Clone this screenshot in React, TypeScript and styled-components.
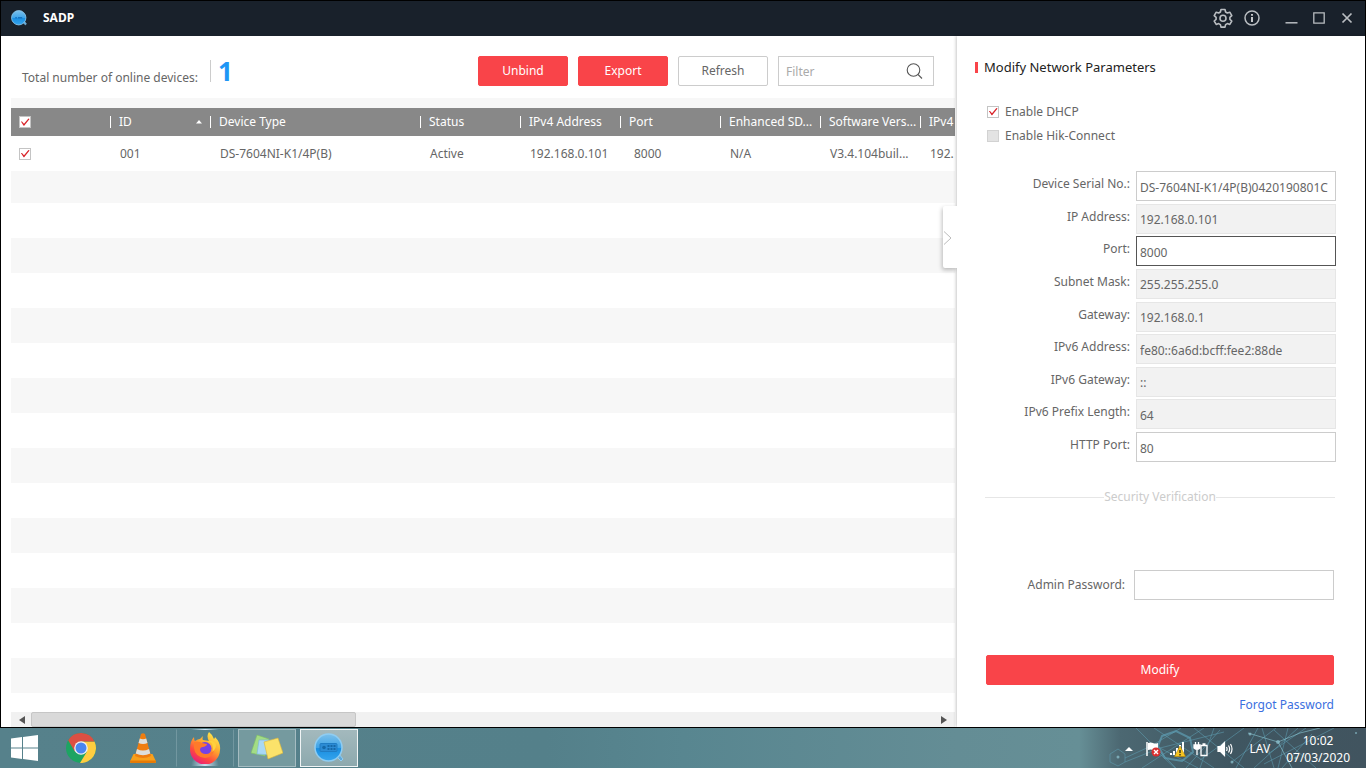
import React from 'react';
import styled, { createGlobalStyle, css } from 'styled-components';

const GlobalStyle = createGlobalStyle`
  *, *::before, *::after { box-sizing: border-box; }
  body {
    margin: 0;
    background: #fff;
    color: #666;
    font: 12px/16px 'Noto Sans', 'Segoe UI', sans-serif;
  }
  button, input { font: inherit; color: inherit; }
`;

const Screen = styled.div`
  display: flex;
  flex-direction: column;
  min-height: 100vh;
`;

const Window = styled.div`
  flex: 1;
  display: flex;
  flex-direction: column;
  border: 1px solid #000;
  background: #fff;
`;

const TitleBar = styled.header`
  display: flex;
  align-items: center;
  height: 35px;
  padding: 0 10px 1px;
  background: #19212b;
  color: #fff;
`;

const AppName = styled.h1`
  flex: 1;
  margin: 0 0 0 16px;
  font-size: 12px;
  line-height: 16px;
`;

const TitleButton = styled.button<{ $wide?: boolean }>`
  display: flex;
  align-items: center;
  justify-content: center;
  width: ${(p) => (p.$wide ? 29 : 28)}px;
  height: 32px;
  padding: 0;
  border: 0;
  background: none;
  color: #b9bdc1;
`;

const TitleActions = styled.div`
  display: flex;
  margin-right: 11px;
`;

const WindowActions = styled.div`
  display: flex;
  margin-right: -6px;
`;

const Body = styled.div`
  flex: 1;
  display: flex;
`;

const Main = styled.main`
  flex: 1;
  min-width: 0;
  display: flex;
  flex-direction: column;
  padding: 0 2px 0 10px;
`;

const Toolbar = styled.div`
  display: flex;
  align-items: center;
  gap: 10px;
  height: 62px;
  padding: 8px 21px 0 11px;
`;

const DeviceTotal = styled.p`
  flex: 1;
  display: flex;
  align-items: center;
  margin: 0;
  white-space: nowrap;
`;

const TotalLabel = styled.span`
  padding-top: 13px;
`;

const TotalCount = styled.strong`
  display: flex;
  align-items: center;
  height: 22px;
  margin-left: 12px;
  padding-left: 7px;
  border-left: 1px solid #ccc;
  color: #1e96f5;
  font-size: 26px;
`;

const Button = styled.button<{ $primary?: boolean; $block?: boolean }>`
  width: ${(p) => (p.$block ? '100%' : '90px')};
  height: 30px;
  padding: 0;
  border: 1px solid ${(p) => (p.$primary ? '#f94449' : '#ccc')};
  border-radius: 2px;
  background: ${(p) => (p.$primary ? '#f94449' : '#fff')};
  color: ${(p) => (p.$primary ? '#fff' : '#666')};
`;

const FilterBox = styled.label`
  display: flex;
  align-items: center;
  width: 156px;
  height: 30px;
  padding: 0 10px 0 7px;
  border: 1px solid #ccc;
`;

const FilterInput = styled.input`
  flex: 1;
  min-width: 0;
  padding: 2px 0 0;
  border: 0;
  outline: 0;
  background: none;
  &::placeholder { color: #aaa; opacity: 1; }
`;

const TableArea = styled.div`
  flex: 1;
  overflow: hidden;
  padding-top: 10px;
  background: linear-gradient(#f7f7f7 10px, transparent 10px),
    repeating-linear-gradient(#fff 0 35px, #f7f7f7 35px 70px) 0 105px no-repeat,
    #f7f7f7;
`;

const DeviceTable = styled.table`
  width: 1009px;
  border-collapse: collapse;
  table-layout: fixed;
  text-align: left;
  white-space: nowrap;
`;

const HeadRow = styled.tr`
  height: 28px;
  background: #888;
  color: #fff;
`;

const BodyRow = styled.tr`
  height: 35px;
  background: #fff;
`;

const HeadCell = styled.th<{ $width: number }>`
  width: ${(p) => p.$width}px;
  padding: 0;
  font-weight: 400;
`;

const HeadLabel = styled.span`
  display: flex;
  align-items: center;
  justify-content: space-between;
  height: 12px;
  padding: 0 8px;
  border-left: 1px solid #fff;
`;

const TightHeadLabel = styled(HeadLabel)`
  padding-right: 0;
`;

const Cell = styled.td<{ $indent?: number }>`
  padding: 0 0 0 ${(p) => p.$indent ?? 10}px;
`;

const CheckCell = styled.div`
  display: flex;
  padding-left: 8px;
`;

const Check = styled.input.attrs({ type: 'checkbox' })`
  appearance: none;
  flex: none;
  width: 12px;
  height: 12px;
  margin: 0;
  border: 1px solid #c4c4c4;
  background: #fff;
  &:checked::before {
    content: '';
    display: block;
    width: 10px;
    height: 10px;
    background: #d9262c;
    clip-path: polygon(9% 46%, 20% 46%, 40% 68%, 84% 16%, 96% 20%, 42% 88%, 36% 88%);
  }
  &:disabled { background: #e3e3e3; border-color: #d2d2d2; }
`;

const ScrollBar = styled.div`
  display: flex;
  align-items: center;
  height: 15px;
  padding: 0 8px;
  background: #f1f1f1;
`;

const ScrollTrack = styled.div`
  flex: 1;
  margin: 0 6px;
`;

const ScrollThumb = styled.div`
  width: 36%;
  height: 15px;
  border: 1px solid #c6c6c6;
  border-radius: 2px;
  background: #d9d9d9;
`;

const Panel = styled.aside`
  position: relative;
  flex: none;
  width: 408px;
  padding: 22px 29px 0 18px;
  background: #fff;
  box-shadow: -1px 0 3px rgba(0, 0, 0, 0.22);
`;

const PanelToggle = styled.button`
  position: absolute;
  top: 170px;
  left: -14px;
  display: flex;
  align-items: center;
  width: 14px;
  height: 62px;
  padding: 2px 0 0;
  border: 0;
  border-radius: 2px 0 0 2px;
  background: #fff;
  box-shadow: -1px 2px 4px rgba(0, 0, 0, 0.25);
  clip-path: inset(-6px 0 -8px -6px);
`;

const PanelTitle = styled.h2`
  display: flex;
  align-items: center;
  gap: 6px;
  margin: 0 0 26px;
  color: #222;
  font-size: 13px;
  font-weight: 400;
  line-height: 18px;
  &::before {
    content: '';
    width: 3px;
    height: 11px;
    background: #f94449;
  }
`;

const CheckLine = styled.label`
  display: flex;
  align-items: center;
  gap: 6px;
  height: 24px;
  padding: 0 0 5px 12px;
`;

const Fields = styled.div`
  display: grid;
  grid-auto-rows: 30px;
  align-content: space-between;
  height: 291px;
  margin-top: 21px;
`;

const Field = styled.div`
  display: flex;
  justify-content: flex-end;
  gap: 6px;
`;

const PasswordField = styled(Field)`
  align-items: center;
  gap: 9px;
`;

const FieldLabel = styled.label`
  padding-bottom: 1px;
  ${Fields} & { padding-top: 5px; }
`;

const fieldState = {
  normal: css`border-color: #ccc;`,
  focused: css`border-color: #555;`,
  locked: css`border-color: #e6e6e6; background: #f2f2f2;`,
};

const TextInput = styled.input<{ $state?: keyof typeof fieldState }>`
  width: 200px;
  height: 30px;
  padding: 2px 0 0 3px;
  border: 1px solid;
  border-radius: 0;
  outline: 0;
  background: #fff;
  ${(p) => fieldState[p.$state ?? 'normal']}
`;

const SectionRule = styled.h3`
  display: flex;
  align-items: center;
  margin: 26px 1px 64px 10px;
  color: #ccc;
  font-size: 12px;
  font-weight: 400;
  line-height: 18px;
  &::before, &::after {
    content: '';
    flex: 1;
    height: 1px;
    background: #e6e6e6;
  }
`;

const Verification = styled.div`
  padding: 0 2px 12px 11px;
`;

const ButtonRow = styled.div`
  margin-top: 55px;
`;

const LinkRow = styled.div`
  margin-top: 12px;
  text-align: right;
`;

const ForgotLink = styled.a`
  color: #3b6fe0;
  text-decoration: none;
`;

const TaskBar = styled.footer`
  position: relative;
  display: flex;
  justify-content: space-between;
  height: 40px;
  overflow: hidden;
  background: linear-gradient(90deg, #56818b 0, #54808a 40%, #588690 50%, #648d95 70%, #668f96 79%, #4c6872 82%, #3f5661 90%, #41545f 100%);
`;

const Backdrop = styled.svg`
  position: absolute;
  top: 0;
  right: 0;
`;

const TaskItems = styled.nav`
  display: flex;
`;

const TaskButton = styled.button<{ $look?: 'start' | 'open' | 'active' }>`
  display: flex;
  align-items: center;
  justify-content: center;
  width: ${(p) => (p.$look === 'start' ? 50 : 58)}px;
  height: 38px;
  margin: 1px ${(p) => (p.$look === 'start' ? 0 : 2)}px;
  padding: ${(p) => (p.$look === 'start' ? '0 2px 0 0' : 0)};
  border: 1px solid transparent;
  background: none;
  ${(p) => p.$look === 'open' && css`
    border-color: #a5bcc1;
    background: #759a9f;
  `}
  ${(p) => p.$look === 'active' && css`
    border-color: #f0f4f5;
    background: linear-gradient(#a3b9bd, #8da9ae);
  `}
`;

const FirefoxButton = styled(TaskButton)`
  border-color: transparent #7297a0;
  background: radial-gradient(circle at 50% 100%, #cfe4f5 0, transparent 14px);
`;

const Tray = styled.div`
  position: relative;
  display: flex;
  align-items: center;
  padding: 2px 16px 0 0;
  color: #fff;
`;

const TrayButton = styled.button`
  display: flex;
  align-items: center;
  justify-content: center;
  width: 24px;
  height: 32px;
  padding: 0;
  border: 0;
  background: none;
`;

const Language = styled.span`
  margin: 0 16px 0 12px;
`;

const Clock = styled.time`
  text-align: center;
  line-height: 17px;
`;

const columns = [
  { label: 'ID', width: 100, sorted: true },
  { label: 'Device Type', width: 210 },
  { label: 'Status', width: 100 },
  { label: 'IPv4 Address', width: 100 },
  { label: 'Port', width: 100 },
  { label: 'Enhanced SD...', width: 100 },
  { label: 'Software Vers...', width: 100 },
  { label: 'IPv4', width: 100 },
];

const devices = [
  ['001', 'DS-7604NI-K1/4P(B)', 'Active', '192.168.0.101', '8000', 'N/A', 'V3.4.104buil...', '192.'],
];

const fields: { id: string; label: string; value: string; state?: keyof typeof fieldState }[] = [
  { id: 'serial', label: 'Device Serial No.:', value: 'DS-7604NI-K1/4P(B)0420190801C' },
  { id: 'ip', label: 'IP Address:', value: '192.168.0.101', state: 'locked' },
  { id: 'port', label: 'Port:', value: '8000', state: 'focused' },
  { id: 'mask', label: 'Subnet Mask:', value: '255.255.255.0', state: 'locked' },
  { id: 'gateway', label: 'Gateway:', value: '192.168.0.1', state: 'locked' },
  { id: 'ip6', label: 'IPv6 Address:', value: 'fe80::6a6d:bcff:fee2:88de', state: 'locked' },
  { id: 'gateway6', label: 'IPv6 Gateway:', value: '::', state: 'locked' },
  { id: 'prefix', label: 'IPv6 Prefix Length:', value: '64', state: 'locked' },
  { id: 'http', label: 'HTTP Port:', value: '80' },
];

const SadpIcon = ({ size, detailed }: { size: number; detailed?: boolean }) => (
  <svg width={size} height={size} viewBox="0 0 30 30" aria-hidden="true">
    <defs>
      <linearGradient id={`lens${size}`} x1="0" y1="0" x2="0" y2="1">
        <stop offset="0" stopColor="#7cc0ea" />
        <stop offset="0.5" stopColor="#3fa4e8" />
        <stop offset="0.54" stopColor="#1a8ee0" />
        <stop offset="1" stopColor="#35a5ee" />
      </linearGradient>
    </defs>
    <path d="m22 23 5 5 2-2-4-5" fill="#5fa9da" stroke="#8fcdf2" />
    <circle cx="14.500" cy="14.500" r="13.500" fill={`url(#lens${size})`} stroke="#8fcdf2" strokeWidth="1.500" />
    {detailed ? (
      <>
        <rect x="6" y="10.500" width="17" height="8" rx="1" fill="#2c8bd4" stroke="#1f7cc4" />
        <circle cx="10" cy="14.500" r="1.800" fill="#1568a8" />
        <path d="M13.500 13h8M13.500 16h8" stroke="#1568a8" strokeWidth="1.800" strokeDasharray="2 1" />
      </>
    ) : (
      <path d="M8 14.500h3M13 14.500h8" stroke="#1673c0" strokeWidth="3" />
    )}
  </svg>
);

const GearIcon = () => (
  <svg width="20" height="20" viewBox="0 0 20 20" fill="none" stroke="currentColor" strokeWidth="1.600" strokeLinejoin="round" aria-hidden="true">
    <path d="M8 1.500h4l.6 2.500 1.700 1 2.500-.8 2 3.400-1.900 1.700v2l1.900 1.700-2 3.400-2.500-.8-1.700 1-.6 2.500H8l-.6-2.500-1.700-1-2.500.8-2-3.400 1.900-1.700v-2L1.200 7.600l2-3.400 2.500.8 1.700-1z" />
    <circle cx="10" cy="10.200" r="3" />
  </svg>
);

const InfoIcon = () => (
  <svg width="16" height="16" viewBox="0 0 16 16" fill="none" stroke="currentColor" strokeWidth="1.500" aria-hidden="true">
    <circle cx="8" cy="8" r="7" />
    <path d="M8 7v5M8 4v1.700" stroke="#fff" />
  </svg>
);

const MinimizeIcon = () => (
  <svg width="13" height="14" viewBox="0 0 13 14" aria-hidden="true">
    <path d="M.5 11.800h12" stroke="currentColor" strokeWidth="1.500" />
  </svg>
);

const MaximizeIcon = () => (
  <svg width="12" height="12" viewBox="0 0 12 12" aria-hidden="true">
    <path d="M.8.8h10.400v10.400H.8z" fill="none" stroke="currentColor" strokeWidth="1.300" />
  </svg>
);

const CloseIcon = () => (
  <svg width="12" height="12" viewBox="0 0 12 12" aria-hidden="true">
    <path d="m1.500 1.500 9 9m0-9-9 9" stroke="currentColor" strokeWidth="1.700" />
  </svg>
);

const SearchIcon = () => (
  <svg width="17" height="17" viewBox="0 0 17 17" fill="none" stroke="#555" strokeWidth="1.100" aria-hidden="true">
    <circle cx="7.500" cy="7" r="6.300" />
    <path d="m12 11.500 4 4" />
  </svg>
);

const Triangle = ({ d, w, h, fill }: { d: string; w: number; h: number; fill: string }) => (
  <svg width={w} height={h} viewBox={`0 0 ${w} ${h}`} aria-hidden="true">
    <path d={d} fill={fill} />
  </svg>
);

const WindowsIcon = () => (
  <svg width="27" height="26" viewBox="0 0 27 26" fill="#fff" aria-hidden="true">
    <path d="M0 3.500 11 2v10.500H0zM12 1.900 27 0v12.500H12zM0 13.500h11V24L0 22.500zM12 13.500h15V26l-15-1.900z" />
  </svg>
);

const ChromeIcon = () => (
  <svg width="30" height="30" viewBox="0 0 30 30" aria-hidden="true">
    <circle cx="15" cy="15" r="15" fill="#1da462" />
    <path d="M15 8.500h13.500A15 15 0 0 1 14 30l7-11.500z" fill="#ffcd40" />
    <path d="M2.200 7.300A15 15 0 0 1 28.500 8.500H15L8.800 18.500z" fill="#dd4f43" />
    <circle cx="15" cy="15" r="6.800" fill="#f1f1f1" />
    <circle cx="15" cy="15" r="5.500" fill="#4a86f0" />
  </svg>
);

const VlcIcon = () => (
  <svg width="28" height="30" viewBox="0 0 28 30" aria-hidden="true">
    <path d="M4.500 21h19L27 28.500q0 1.500-1.500 1.500h-23Q1 30 1 28.500z" fill="#f9a01b" />
    <path d="M1 27.500h26v1Q27 30 25.500 30h-23Q1 30 1 28.500z" fill="#e67a05" />
    <path d="M12 1q2-1.500 4 0l6 22q-8 4-16 0z" fill="#ef7d10" />
    <path d="M10.800 5.500q3.200 1.500 6.400 0l1.300 4.500q-4.500 2-9 0zM8 16q6 3 12 0l1.300 4.500q-7.300 3.500-14.600 0z" fill="#dededb" />
  </svg>
);

const FirefoxIcon = () => (
  <svg width="32" height="32" viewBox="0 0 32 32" aria-hidden="true">
    <defs>
      <linearGradient id="fox" x1="0.8" y1="0" x2="0.2" y2="1">
        <stop offset="0" stopColor="#fff04f" />
        <stop offset="0.4" stopColor="#ffa62e" />
        <stop offset="0.7" stopColor="#ff4b3e" />
        <stop offset="1" stopColor="#e31587" />
      </linearGradient>
    </defs>
    <path d="M20 0q4 3 5 7 1-1 1-2 6 6 5 13A15 15 0 0 1 1 17Q1 9 5 5q0 3 1 4 3-2 5-2l3-3q-1 3 0 4l6 1q-3-5 0-9z" fill="url(#fox)" />
    <circle cx="16" cy="16.500" r="6.500" fill="#7542e5" />
    <path d="M5 10q5-1 8 1l5 1q0 2-4 3-3 0-3 3 1 4 6 4 5 0 8-4-1 7-9 8Q6 25 5 16z" fill="#ff7a2a" />
    <path d="M18 9q6 1 6 7 0 3-1 4 4-3 4-7-1-5-9-4z" fill="#ffd13d" />
  </svg>
);

const NotesIcon = () => (
  <svg width="32" height="28" viewBox="0 0 32 28" aria-hidden="true">
    <path d="m6 1 12 4-4 17-14-3z" fill="#a3dc86" stroke="#7fbf63" strokeWidth=".6" />
    <path d="m8 6 14 0-1 15-15-1z" fill="#a9d8f5" stroke="#79b4dc" strokeWidth=".6" />
    <path d="m13 8 14-4 5 15-15 6z" fill="#fbe26a" stroke="#d9b63a" strokeWidth=".6" />
  </svg>
);

const FlagIcon = () => (
  <svg width="16" height="16" viewBox="0 0 16 16" aria-hidden="true">
    <path d="M2 1v14" stroke="#fff" strokeWidth="1.500" />
    <path d="M3 2q3-1 5 0t5 0v7q-3 1-5 0T3 9z" fill="#fff" />
    <circle cx="11" cy="11" r="4.500" fill="#d93030" />
    <path d="m9 9 4 4m0-4-4 4" stroke="#fff" strokeWidth="1.400" />
  </svg>
);

const SignalIcon = () => (
  <svg width="17" height="16" viewBox="0 0 17 16" aria-hidden="true">
    <path d="M1 12h2v2H1zM4 10h2v4H4zM7 7h2v7H7zM10 4h2v10h-2zM13 1h2v13h-2z" fill="#fff" />
    <path d="m11 5 5.500 10.500h-11z" fill="#f7c520" stroke="#b98700" strokeWidth=".6" />
    <path d="M11 9v3m0 1v1.500" stroke="#222" strokeWidth="1.300" />
  </svg>
);

const BatteryIcon = () => (
  <svg width="16" height="16" viewBox="0 0 16 16" fill="none" stroke="#fff" strokeWidth="1.300" aria-hidden="true">
    <path d="M8 4.500h6v10H8zM9.500 3h3" />
    <path d="M1 4h6v3L5.500 8h-3L1 7z" fill="#fff" />
    <path d="M2.500 4V1M5.500 4V1M4 8v6" />
  </svg>
);

const SpeakerIcon = () => (
  <svg width="17" height="16" viewBox="0 0 17 16" fill="none" stroke="#fff" strokeWidth="1.200" aria-hidden="true">
    <path d="M1 5.500h2.500L7.500 1.500v13l-4-4H1z" fill="#fff" />
    <path d="M9.500 6q1.200 2 0 4M11.500 4.500q2.200 3.500 0 7M13.500 3q3 5 0 10" />
  </svg>
);

const NetworkBackdrop = () => (
  <Backdrop width="300" height="40" viewBox="0 0 300 40" fill="none" stroke="#5e9eb3" aria-hidden="true">
    <g opacity=".55">
      <path d="m44 26 8-5 7 5v8l-7 4-8-4zM59 30l26-12 30-18M59 34l35-14 38 20M70 0l40 40M88 0l60 40M85 18l24 22M94 20l64-16M120 40l34-38M128 0l50 40M76 40l62-40M148 0l-14 40M170 40l22-40M178 0l-44 32M188 40l44-40M196 0l12 40M210 0l-44 34M216 40l30-34M222 0l-10 40M240 0l-38 26M250 40l-42-38M268 0l-70 36" />
    </g>
    <path d="m96 8 14-5 14 7 3 14-11 9-17-3-7-12z" strokeWidth="2" opacity=".7" />
    <path d="m212 14 22-9 20-5M212 14l14 26M212 14l-30-9" stroke="#8cc9d6" opacity=".6" />
    <g fill="#8fc6d2" stroke="none" opacity=".7">
      <circle cx="212" cy="14" r="2" /><circle cx="184" cy="6" r="1.500" /><circle cx="166" cy="34" r="1.500" />
      <circle cx="230" cy="30" r="1.500" /><circle cx="290" cy="5" r="1" /><circle cx="52" cy="29" r="1.500" />
    </g>
  </Backdrop>
);

export default function App() {
  return (
    <Screen>
      <GlobalStyle />
      <Window>
        <TitleBar>
          <SadpIcon size={16} />
          <AppName>SADP</AppName>
          <TitleActions>
            <TitleButton $wide aria-label="Settings"><GearIcon /></TitleButton>
            <TitleButton $wide aria-label="About"><InfoIcon /></TitleButton>
          </TitleActions>
          <WindowActions>
            <TitleButton aria-label="Minimize"><MinimizeIcon /></TitleButton>
            <TitleButton aria-label="Maximize"><MaximizeIcon /></TitleButton>
            <TitleButton aria-label="Close"><CloseIcon /></TitleButton>
          </WindowActions>
        </TitleBar>
        <Body>
          <Main>
            <Toolbar>
              <DeviceTotal>
                <TotalLabel>Total number of online devices:</TotalLabel>
                <TotalCount>1</TotalCount>
              </DeviceTotal>
              <Button $primary>Unbind</Button>
              <Button $primary>Export</Button>
              <Button>Refresh</Button>
              <FilterBox>
                <FilterInput type="text" placeholder="Filter" aria-label="Filter" />
                <SearchIcon />
              </FilterBox>
            </Toolbar>
            <TableArea>
              <DeviceTable>
                <thead>
                  <HeadRow>
                    <HeadCell $width={99}>
                      <CheckCell><Check defaultChecked aria-label="Select all devices" /></CheckCell>
                    </HeadCell>
                    {columns.map((c) => {
                      const Label = c.sorted ? HeadLabel : TightHeadLabel;
                      return (
                        <HeadCell key={c.label} $width={c.width}>
                          <Label>
                            {c.label}
                            {c.sorted && <Triangle w={6} h={4} d="m3 0 3 3.500H0z" fill="#fff" />}
                          </Label>
                        </HeadCell>
                      );
                    })}
                  </HeadRow>
                </thead>
                <tbody>
                  {devices.map((row) => (
                    <BodyRow key={row[0]}>
                      <Cell $indent={0}>
                        <CheckCell><Check defaultChecked aria-label={`Select device ${row[0]}`} /></CheckCell>
                      </Cell>
                      {row.map((value, i) => (
                        <Cell key={columns[i].label} $indent={columns[i].label === 'Port' ? 14 : 10}>{value}</Cell>
                      ))}
                    </BodyRow>
                  ))}
                </tbody>
              </DeviceTable>
            </TableArea>
            <ScrollBar>
              <Triangle w={6} h={8} d="M6 0v8L0 4z" fill="#555" />
              <ScrollTrack><ScrollThumb /></ScrollTrack>
              <Triangle w={6} h={8} d="M0 0v8l6-4z" fill="#555" />
            </ScrollBar>
          </Main>
          <Panel>
            <PanelToggle aria-label="Collapse panel">
              <svg width="10" height="14" viewBox="0 0 10 14" fill="none" stroke="#bbb" aria-hidden="true">
                <path d="m1 .5 7 6.500-7 6.500" />
              </svg>
            </PanelToggle>
            <PanelTitle>Modify Network Parameters</PanelTitle>
            <CheckLine><Check defaultChecked />Enable DHCP</CheckLine>
            <CheckLine><Check disabled />Enable Hik-Connect</CheckLine>
            <Fields>
              {fields.map((f) => (
                <Field key={f.id}>
                  <FieldLabel htmlFor={f.id}>{f.label}</FieldLabel>
                  <TextInput id={f.id} type="text" defaultValue={f.value} $state={f.state} readOnly={f.state === 'locked'} />
                </Field>
              ))}
            </Fields>
            <SectionRule>Security Verification</SectionRule>
            <Verification>
              <PasswordField>
                <FieldLabel htmlFor="password">Admin Password:</FieldLabel>
                <TextInput id="password" type="password" />
              </PasswordField>
              <ButtonRow><Button $primary $block>Modify</Button></ButtonRow>
              <LinkRow><ForgotLink href="#forgot">Forgot Password</ForgotLink></LinkRow>
            </Verification>
          </Panel>
        </Body>
      </Window>
      <TaskBar>
        <NetworkBackdrop />
        <TaskItems>
          <TaskButton $look="start" aria-label="Start"><WindowsIcon /></TaskButton>
          <TaskButton aria-label="Chrome"><ChromeIcon /></TaskButton>
          <TaskButton aria-label="VLC"><VlcIcon /></TaskButton>
          <FirefoxButton aria-label="Firefox"><FirefoxIcon /></FirefoxButton>
          <TaskButton $look="open" aria-label="Sticky Notes"><NotesIcon /></TaskButton>
          <TaskButton $look="active" aria-label="SADP"><SadpIcon size={30} detailed /></TaskButton>
        </TaskItems>
        <Tray>
          <TrayButton aria-label="Show hidden icons"><Triangle w={8} h={4} d="m4 0 4 4H0z" fill="#fff" /></TrayButton>
          <TrayButton aria-label="Action Center"><FlagIcon /></TrayButton>
          <TrayButton aria-label="Network"><SignalIcon /></TrayButton>
          <TrayButton aria-label="Battery"><BatteryIcon /></TrayButton>
          <TrayButton aria-label="Volume"><SpeakerIcon /></TrayButton>
          <Language>LAV</Language>
          <Clock>10:02<br />07/03/2020</Clock>
        </Tray>
      </TaskBar>
    </Screen>
  );
}
